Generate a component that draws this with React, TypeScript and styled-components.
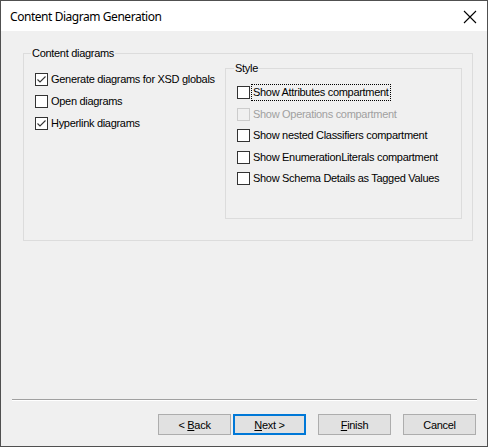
import React from 'react';
import styled, { createGlobalStyle } from 'styled-components';

const GlobalStyle = createGlobalStyle`
  html, body {
    margin: 0;
    padding: 0;
    background: #f0f0f0;
  }
  * {
    box-sizing: border-box;
  }
`;

interface CheckProps {
  checked?: boolean;
  disabled?: boolean;
}

interface OptionItem {
  label: string;
  checked?: boolean;
  disabled?: boolean;
  focused?: boolean;
}

const mainOptions: OptionItem[] = [
  { label: 'Generate diagrams for XSD globals', checked: true },
  { label: 'Open diagrams' },
  { label: 'Hyperlink diagrams', checked: true },
];

const styleOptions: OptionItem[] = [
  { label: 'Show Attributes compartment', focused: true },
  { label: 'Show Operations compartment', disabled: true },
  { label: 'Show nested Classifiers compartment' },
  { label: 'Show EnumerationLiterals compartment' },
  { label: 'Show Schema Details as Tagged Values' },
];

const CheckBox: React.FC<CheckProps> = ({ checked, disabled }) => (
  <Box disabled={disabled}>
    {checked && (
      <svg width="11" height="11" viewBox="0 0 11 11">
        <polyline
          points="1.5,5.5 4,8 9.5,2.5"
          fill="none"
          stroke="#333"
          strokeWidth="1.1"
        />
      </svg>
    )}
  </Box>
);

const Option: React.FC<{ item: OptionItem; rowHeight: number }> = ({
  item,
  rowHeight,
}) => (
  <Row style={{ height: rowHeight }}>
    <CheckBox checked={item.checked} disabled={item.disabled} />
    <Label disabled={item.disabled} focused={item.focused}>
      {item.label}
    </Label>
  </Row>
);

const App: React.FC = () => (
  <>
    <GlobalStyle />
    <Window>
      <TitleBar>
        <Title>Content Diagram Generation</Title>
        <CloseIcon width="14" height="14" viewBox="0 0 14 14">
          <path d="M1 1 L13 13 M13 1 L1 13" stroke="#000" strokeWidth="1.1" />
        </CloseIcon>
      </TitleBar>
      <Body>
        <ContentGroup>
          <GroupLabel left={7}>Content diagrams</GroupLabel>
          <LeftColumn>
            {mainOptions.map((item) => (
              <Option key={item.label} item={item} rowHeight={22} />
            ))}
          </LeftColumn>
          <StyleGroup>
            <GroupLabel left={8}>Style</GroupLabel>
            {styleOptions.map((item) => (
              <Option key={item.label} item={item} rowHeight={21.5} />
            ))}
          </StyleGroup>
        </ContentGroup>
        <Separator />
        <Footer>
          <Button>
            <span>
              &lt; <u>B</u>ack
            </span>
          </Button>
          <Button primary>
            <span>
              <u>N</u>ext &gt;
            </span>
          </Button>
          <Button spaced>
            <span>
              <u>F</u>inish
            </span>
          </Button>
          <Button spaced>
            <span>Cancel</span>
          </Button>
        </Footer>
      </Body>
    </Window>
  </>
);

export default App;

const Window = styled.div`
  width: 488px;
  height: 447px;
  border: 1px solid #505050;
  display: flex;
  flex-direction: column;
  background: #f0f0f0;
  font-family: 'Liberation Sans', Arial, sans-serif;
  font-size: 11px;
  letter-spacing: -0.3px;
  color: #000;
  overflow: hidden;
`;

const TitleBar = styled.div`
  height: 30px;
  background: #fff;
  display: flex;
  align-items: center;
  justify-content: space-between;
  padding: 0 10px 0 9px;
  flex-shrink: 0;
`;

const Title = styled.span`
  font-family: 'Noto Sans', 'Open Sans', sans-serif;
  font-size: 12px;
  letter-spacing: -0.45px;
  color: #000;
`;

const CloseIcon = styled.svg`
  display: block;
  margin-top: 1px;
`;

const Body = styled.div`
  flex: 1;
  display: flex;
  flex-direction: column;
  padding-top: 22px;
`;

const ContentGroup = styled.div`
  position: relative;
  width: 450px;
  height: 188px;
  margin-left: 22px;
  border: 1px solid #dcdcdc;
  display: flex;
  align-items: flex-start;
  padding: 14px 0 0 11px;
`;

const GroupLabel = styled.span<{ left: number }>`
  position: absolute;
  top: -7px;
  left: ${(p) => p.left}px;
  padding: 0 1px;
  background: #f0f0f0;
  line-height: 13px;
`;

const LeftColumn = styled.div`
  width: 190px;
  display: flex;
  flex-direction: column;
`;

const StyleGroup = styled.div`
  position: relative;
  width: 237px;
  height: 151px;
  border: 1px solid #dcdcdc;
  display: flex;
  flex-direction: column;
  padding: 13px 0 0 11px;
`;

const Row = styled.div`
  display: flex;
  align-items: center;
  white-space: nowrap;
`;

const Box = styled.span<CheckProps>`
  width: 13px;
  height: 13px;
  flex-shrink: 0;
  border: 1px solid ${(p) => (p.disabled ? '#cccccc' : '#333333')};
  background: ${(p) => (p.disabled ? '#f0f0f0' : '#ffffff')};
  display: flex;
  align-items: center;
  justify-content: center;
`;

const Label = styled.span<{ disabled?: boolean; focused?: boolean }>`
  margin-left: 2px;
  padding: 1px 1px;
  line-height: 13px;
  color: ${(p) => (p.disabled ? '#a0a0a0' : '#000')};
  outline: ${(p) => (p.focused ? '1px dotted #000' : 'none')};
`;

const Separator = styled.div`
  margin-top: auto;
  margin-left: 11px;
  width: 465px;
  height: 2px;
  border-top: 1px solid #a0a0a0;
  border-bottom: 1px solid #ffffff;
`;

const Footer = styled.div`
  display: flex;
  justify-content: flex-end;
  padding: 13px 11px 11px 0;
`;

const Button = styled.button<{ primary?: boolean; spaced?: boolean }>`
  width: 73px;
  height: 21px;
  margin-left: ${(p) => (p.spaced ? 12 : p.primary ? 2 : 0)}px;
  background: #e1e1e1;
  border: ${(p) => (p.primary ? '2px solid #0078d7' : '1px solid #adadad')};
  font-family: 'Liberation Sans', Arial, sans-serif;
  font-size: 11px;
  letter-spacing: -0.3px;
  color: #000;
  padding: 0;
  display: flex;
  align-items: center;
  justify-content: center;
  u {
    text-underline-offset: 1px;
  }
`;
